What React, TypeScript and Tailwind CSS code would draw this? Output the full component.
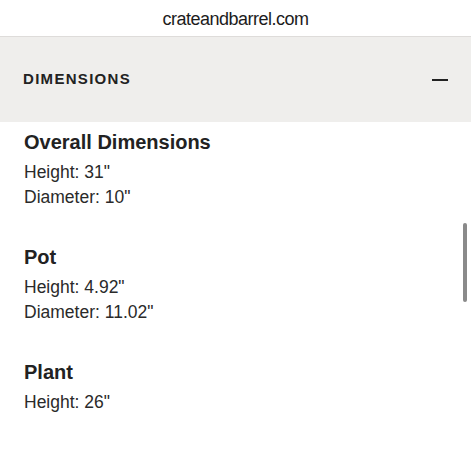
import React from "react";

const sections = [
  { title: "Overall Dimensions", lines: ['Height: 31"', 'Diameter: 10"'] },
  { title: "Pot", lines: ['Height: 4.92"', 'Diameter: 11.02"'] },
  { title: "Plant", lines: ['Height: 26"'] },
];

export default function App() {
  return (
    <div
      className="relative w-[471px] h-[450px] overflow-hidden bg-white text-[#222222]"
      style={{ fontFamily: '"Liberation Sans", Arial, sans-serif' }}
    >
      <div className="h-[37px] border-b border-[#dedcda] flex items-center justify-center pt-[3px]">
        <span className="text-[18px] tracking-[-0.5px] text-[#1c1c1c]">crateandbarrel.com</span>
      </div>
      <div className="h-[85px] bg-[#efeeec] flex items-center justify-between pl-[23px] pr-[23px]">
        <span className="text-[15px] font-bold tracking-[1.3px] text-[#222222]">DIMENSIONS</span>
        <span className="block w-[16px] h-[2px] bg-[#222222]" />
      </div>
      <div className="pl-[24px] pt-[8px] flex flex-col gap-[35px]">
        {sections.map((s) => (
          <div key={s.title} className="flex flex-col gap-[6px]">
            <div className="text-[20px] leading-[24px] font-bold text-[#222222]">{s.title}</div>
            <div className="flex flex-col">
              {s.lines.map((l) => (
                <div key={l} className="text-[17.5px] leading-[25px] text-[#2a2a2a]">
                  {l}
                </div>
              ))}
            </div>
          </div>
        ))}
      </div>
      <div className="absolute left-[463px] top-[223px] w-[4px] h-[79px] rounded-full bg-[#8a8a8a]" />
    </div>
  );
}
